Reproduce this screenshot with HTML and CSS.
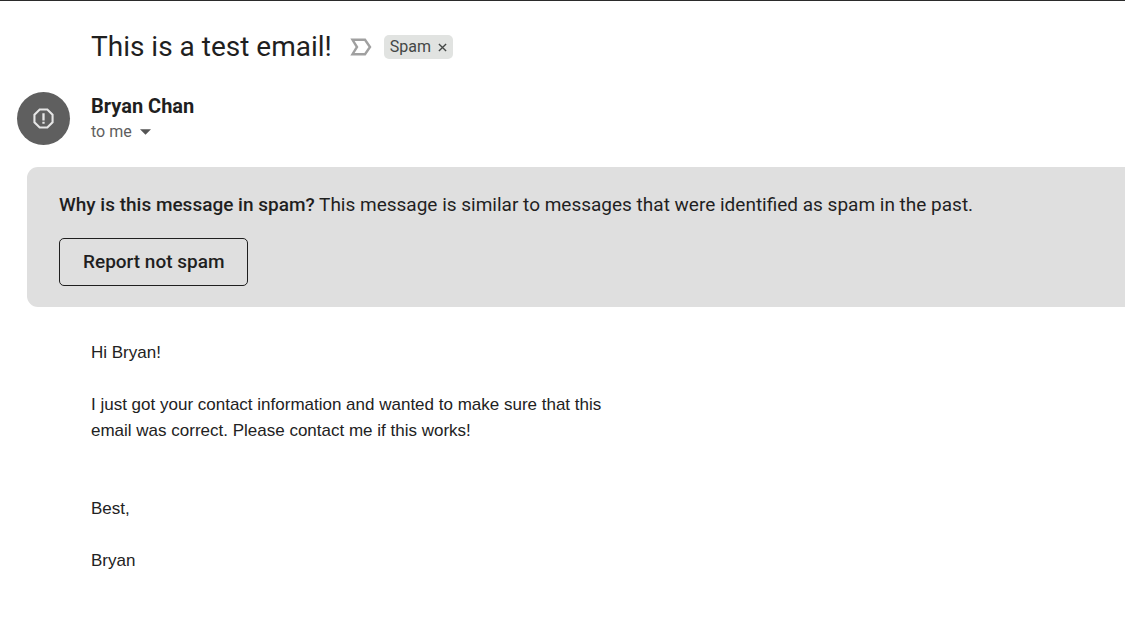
FILE: index.html
```
<!DOCTYPE html>
<html lang="en">
<head>
<meta charset="utf-8">
<meta name="viewport" content="width=device-width, initial-scale=1">
<title>This is a test email!</title>
<link rel="stylesheet" href="styles.css">
</head>
<body>
<main class="message">
  <header class="subject">
    <h1 class="subject-title">This is a test email!</h1>
    <button class="icon-button" type="button" aria-label="Mark as important">
      <svg class="marker" viewBox="0 0 22 18" aria-hidden="true"><path d="M2.500 1.800H15L20 9l-5 7.200H2.500L7 9z" fill="none" stroke="#a0a0a0" stroke-width="2.400"/></svg>
    </button>
    <span class="label">Spam
      <button class="icon-button" type="button" aria-label="Remove label Spam">
        <svg class="close" viewBox="0 0 10 10" aria-hidden="true"><path d="M1 1l8 8M9 1L1 9" fill="none" stroke="#444746" stroke-width="1.5"/></svg>
      </button>
    </span>
  </header>
  <section class="sender">
    <div class="avatar">
      <svg class="avatar-icon" viewBox="0 0 22 22" aria-hidden="true"><path d="M7 1.500h8L20.500 7v8L15 20.500H7L1.500 15V7z" fill="none" stroke="#e6e6e6" stroke-width="2.200"/><path d="M11 5.500v7.500M11 14.500v2" fill="none" stroke="#e6e6e6" stroke-width="2.400"/></svg>
    </div>
    <div class="sender-text">
      <h2 class="sender-name">Bryan Chan</h2>
      <button class="icon-button recipient" type="button">to me
        <svg class="caret" viewBox="0 0 12 6" aria-hidden="true"><path d="M0 0h12L6 6z" fill="#555"/></svg>
      </button>
    </div>
  </section>
  <section class="notice">
    <p class="notice-text"><strong class="notice-question">Why is this message in spam?</strong> This message is similar to messages that were identified as spam in the past.</p>
    <button class="report" type="button">Report not spam</button>
  </section>
  <article class="body">
    <p>Hi Bryan!</p>
    <p>I just got your contact information and wanted to make sure that this<br>email was correct. Please contact me if this works!</p>
    <p class="sign-off">Best,</p>
    <p>Bryan</p>
  </article>
</main>
</body>
</html>
```
FILE: styles.css
```
* {
  box-sizing: border-box;
}

body {
  margin: 0;
  background: #fff;
  color: #1f1f1f;
  font-family: "Google Sans", Roboto, "Liberation Sans", sans-serif;
}

h1, h2, p {
  margin: 0;
}

svg {
  display: block;
}

.message {
  border-top: 1px solid #2b2b2b;
}

.icon-button {
  display: flex;
  padding: 0;
  border: 0;
  background: none;
  color: inherit;
  font: inherit;
}

.subject {
  display: flex;
  align-items: center;
  padding: 26px 16px 0 91px;
}

.subject-title {
  margin-right: 18px;
  font-size: 28px;
  line-height: 40px;
  font-weight: 400;
}

.marker {
  width: 22px;
  height: 18px;
}

.label {
  display: flex;
  align-items: center;
  gap: 7px;
  margin-left: 12px;
  padding: 0 6px;
  border-radius: 5px;
  background: #e1e3e1;
  color: #444746;
  font-size: 16px;
  line-height: 24px;
}

.close {
  width: 9px;
  height: 9px;
}

.sender {
  display: flex;
  align-items: center;
  gap: 21px;
  padding: 25px 17px 0;
}

.avatar {
  display: grid;
  place-items: center;
  width: 53px;
  height: 53px;
  border-radius: 50%;
  background: #5f5f5f;
}

.avatar-icon {
  width: 21px;
  height: 21px;
}

.sender-name {
  font-size: 20px;
  line-height: 26px;
  font-weight: 700;
}

.recipient {
  align-items: center;
  gap: 8px;
  color: #5e5e5e;
  font-size: 16px;
  line-height: 26px;
}

.caret {
  width: 11px;
  height: 6px;
}

.notice {
  margin: 22px 0 0 27px;
  padding: 25px 16px 21px 32px;
  border-radius: 11px 0 0 11px;
  background: #dfdfdf;
}

.notice-text {
  font-size: 19px;
  line-height: 26px;
}

.notice-question {
  font-weight: 500;
}

.report {
  display: block;
  margin-top: 20px;
  padding: 0 23px;
  border: 1px solid #1f1f1f;
  border-radius: 5px;
  background: none;
  color: #1f1f1f;
  font: inherit;
  font-size: 19px;
  font-weight: 500;
  line-height: 46px;
}

.body {
  display: grid;
  gap: 26px;
  padding: 33px 16px 32px 91px;
  color: #222;
  font-family: "Liberation Sans", Arial, sans-serif;
  font-size: 17px;
  line-height: 26px;
}

.sign-off {
  margin-top: 26px;
}
```
